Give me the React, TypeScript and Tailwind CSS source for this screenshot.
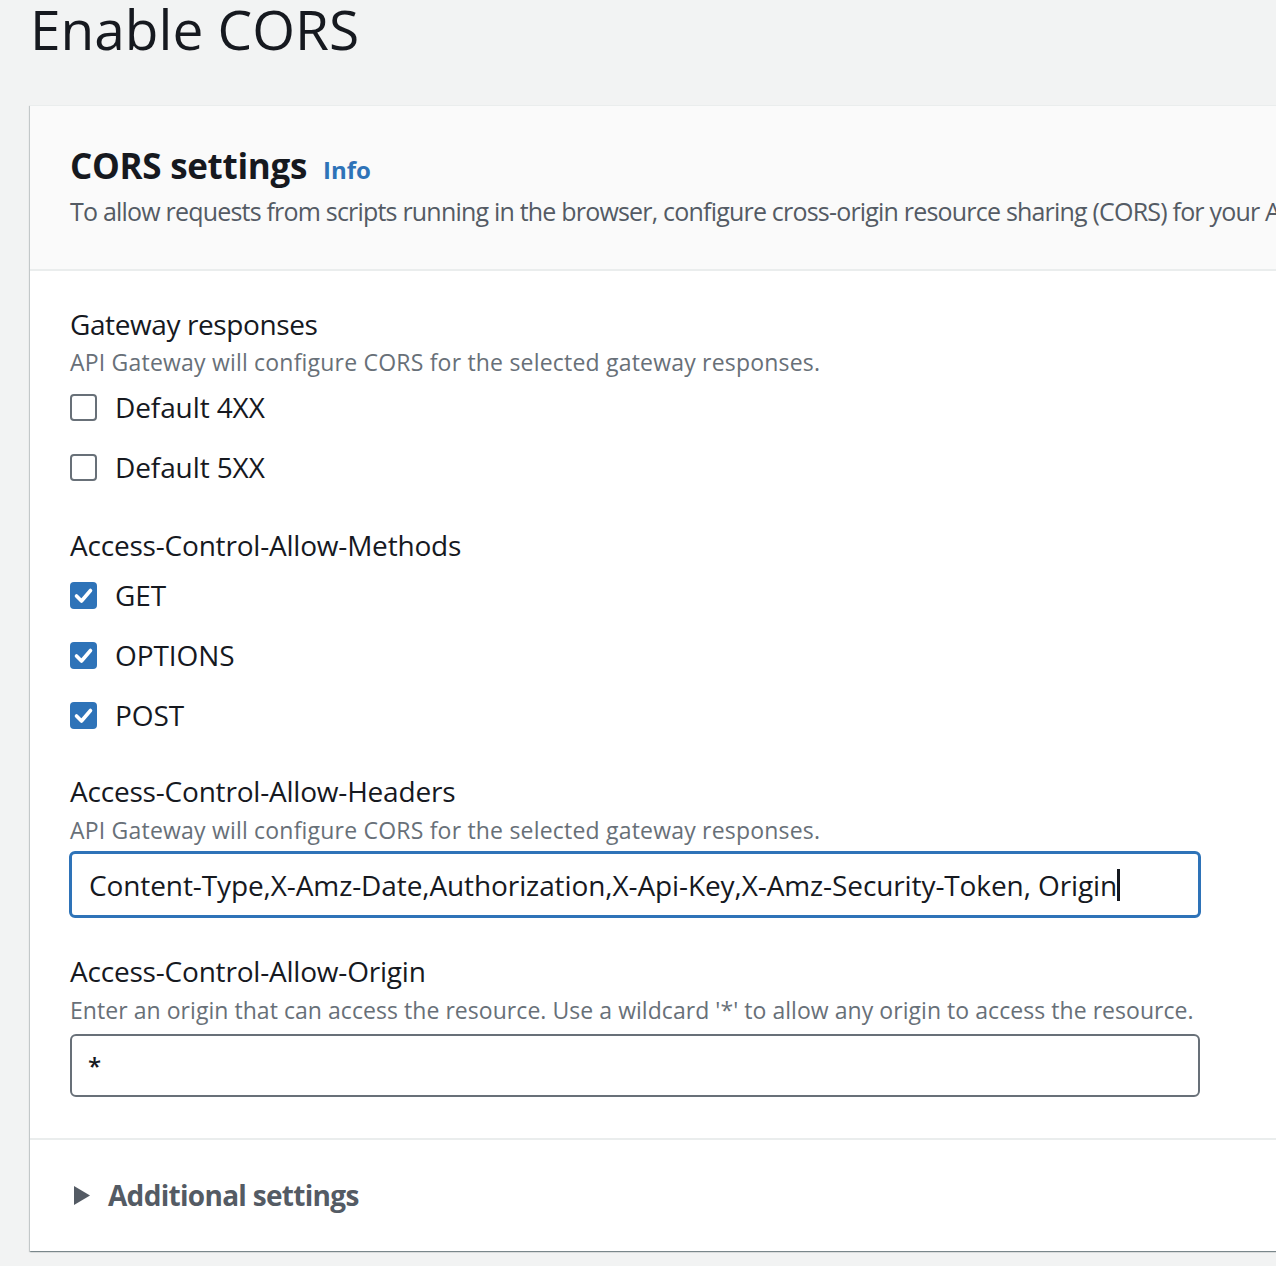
const font = { fontFamily: '"Open Sans", "Noto Sans", sans-serif' };

function Box({ checked }: { checked?: boolean }) {
  if (checked) {
    return (
      <div className="w-[27px] h-[27px] rounded-[4px] bg-[#2e73b8] flex items-center justify-center shrink-0">
        <svg width="27" height="27" viewBox="0 0 27 27">
          <polyline points="6.5,14 11.5,19 20.5,8.5" fill="none" stroke="#fff" strokeWidth="3.6" strokeLinecap="round" strokeLinejoin="round" />
        </svg>
      </div>
    );
  }
  return <div className="w-[27px] h-[27px] rounded-[4px] border-2 border-[#687078] bg-white shrink-0" />;
}

function Option({ label, checked }: { label: string; checked?: boolean }) {
  return (
    <div className="flex items-center h-[36px] gap-[18px]">
      <Box checked={checked} />
      <span className="text-[28px] leading-[36px] text-[#16191f] tracking-[-0.1px]">{label}</span>
    </div>
  );
}

export default function App() {
  return (
    <div className="w-[1276px] h-[1266px] overflow-hidden bg-[#f2f3f3]" style={font}>
      <h1 className="pl-[30px] text-[55px] leading-[58px] text-[#16191f] font-normal">Enable CORS</h1>

      <div className="mt-[47px] ml-[30px] w-[1300px] bg-white shadow-[0_1px_1px_0_rgba(0,28,36,0.3),1px_1px_1px_0_rgba(0,28,36,0.15),-1px_1px_1px_0_rgba(0,28,36,0.15)] border-t border-[#eaeded]">
        {/* header */}
        <div className="bg-[#fafafa] border-b-2 border-[#eaeded] pl-[40px] pt-[38px] pb-[42px]">
          <div className="flex items-baseline gap-[16px]">
            <h2 className="text-[35px] leading-[44px] font-bold text-[#16191f] tracking-[-0.3px]">CORS settings</h2>
            <span className="text-[24px] font-bold text-[#2e73b8]">Info</span>
          </div>
          <p className="mt-[7px] text-[25px] leading-[32px] text-[#545b64] whitespace-nowrap tracking-[-0.8px]">
            To allow requests from scripts running in the browser, configure cross-origin resource sharing (CORS) for your API.
          </p>
        </div>

        {/* body */}
        <div className="pl-[40px] pt-[35px] pb-[41px] border-b-2 border-[#eaeded]">
          <div className="text-[28px] leading-[36px] text-[#16191f] tracking-[-0.4px]">Gateway responses</div>
          <div className="mt-[5px] text-[23px] leading-[30px] text-[#687078] tracking-[0.2px]">API Gateway will configure CORS for the selected gateway responses.</div>
          <div className="mt-[12px] flex flex-col gap-[24px]">
            <Option label="Default 4XX" />
            <Option label="Default 5XX" />
          </div>

          <div className="mt-[42px] text-[28px] leading-[36px] text-[#16191f] tracking-[-0.2px]">Access-Control-Allow-Methods</div>
          <div className="mt-[14px] flex flex-col gap-[24px]">
            <Option label="GET" checked />
            <Option label="OPTIONS" checked />
            <Option label="POST" checked />
          </div>

          <div className="mt-[40px] text-[28px] leading-[36px] text-[#16191f] tracking-[-0.2px]">Access-Control-Allow-Headers</div>
          <div className="mt-[6px] text-[23px] leading-[30px] text-[#687078] tracking-[0.2px]">API Gateway will configure CORS for the selected gateway responses.</div>
          <div className="mt-[6px] w-[1132px] h-[67px] -ml-[1px] rounded-[6px] border-[3px] border-[#2e73b8] bg-white flex items-center pl-[17px]">
            <span className="text-[28px] leading-[36px] text-[#16191f] whitespace-nowrap tracking-[-0.1px]">Content-Type,X-Amz-Date,Authorization,X-Api-Key,X-Amz-Security-Token, Origin</span>
            <span className="inline-block w-[3px] h-[32px] bg-[#16191f]" />
          </div>

          <div className="mt-[35px] text-[28px] leading-[36px] text-[#16191f] tracking-[-0.2px]">Access-Control-Allow-Origin</div>
          <div className="mt-[6px] text-[23px] leading-[30px] text-[#687078] tracking-[0.05px]">Enter an origin that can access the resource. Use a wildcard '*' to allow any origin to access the resource.</div>
          <div className="mt-[9px] w-[1130px] h-[63px] rounded-[6px] border-2 border-[#687078] bg-white flex items-center pl-[16px]">
            <span className="text-[24px] leading-[36px] text-[#16191f] font-semibold">*</span>
          </div>
        </div>

        {/* footer */}
        <div className="pl-[44px] pt-[37px] pb-[38px] flex items-center gap-[18px]">
          <svg width="16" height="19" viewBox="0 0 16 19">
            <polygon points="0,0 16,9.5 0,19" fill="#545b64" />
          </svg>
          <span className="text-[28px] leading-[36px] font-bold text-[#545b64] tracking-[-0.7px]">Additional settings</span>
        </div>
      </div>
    </div>
  );
}
